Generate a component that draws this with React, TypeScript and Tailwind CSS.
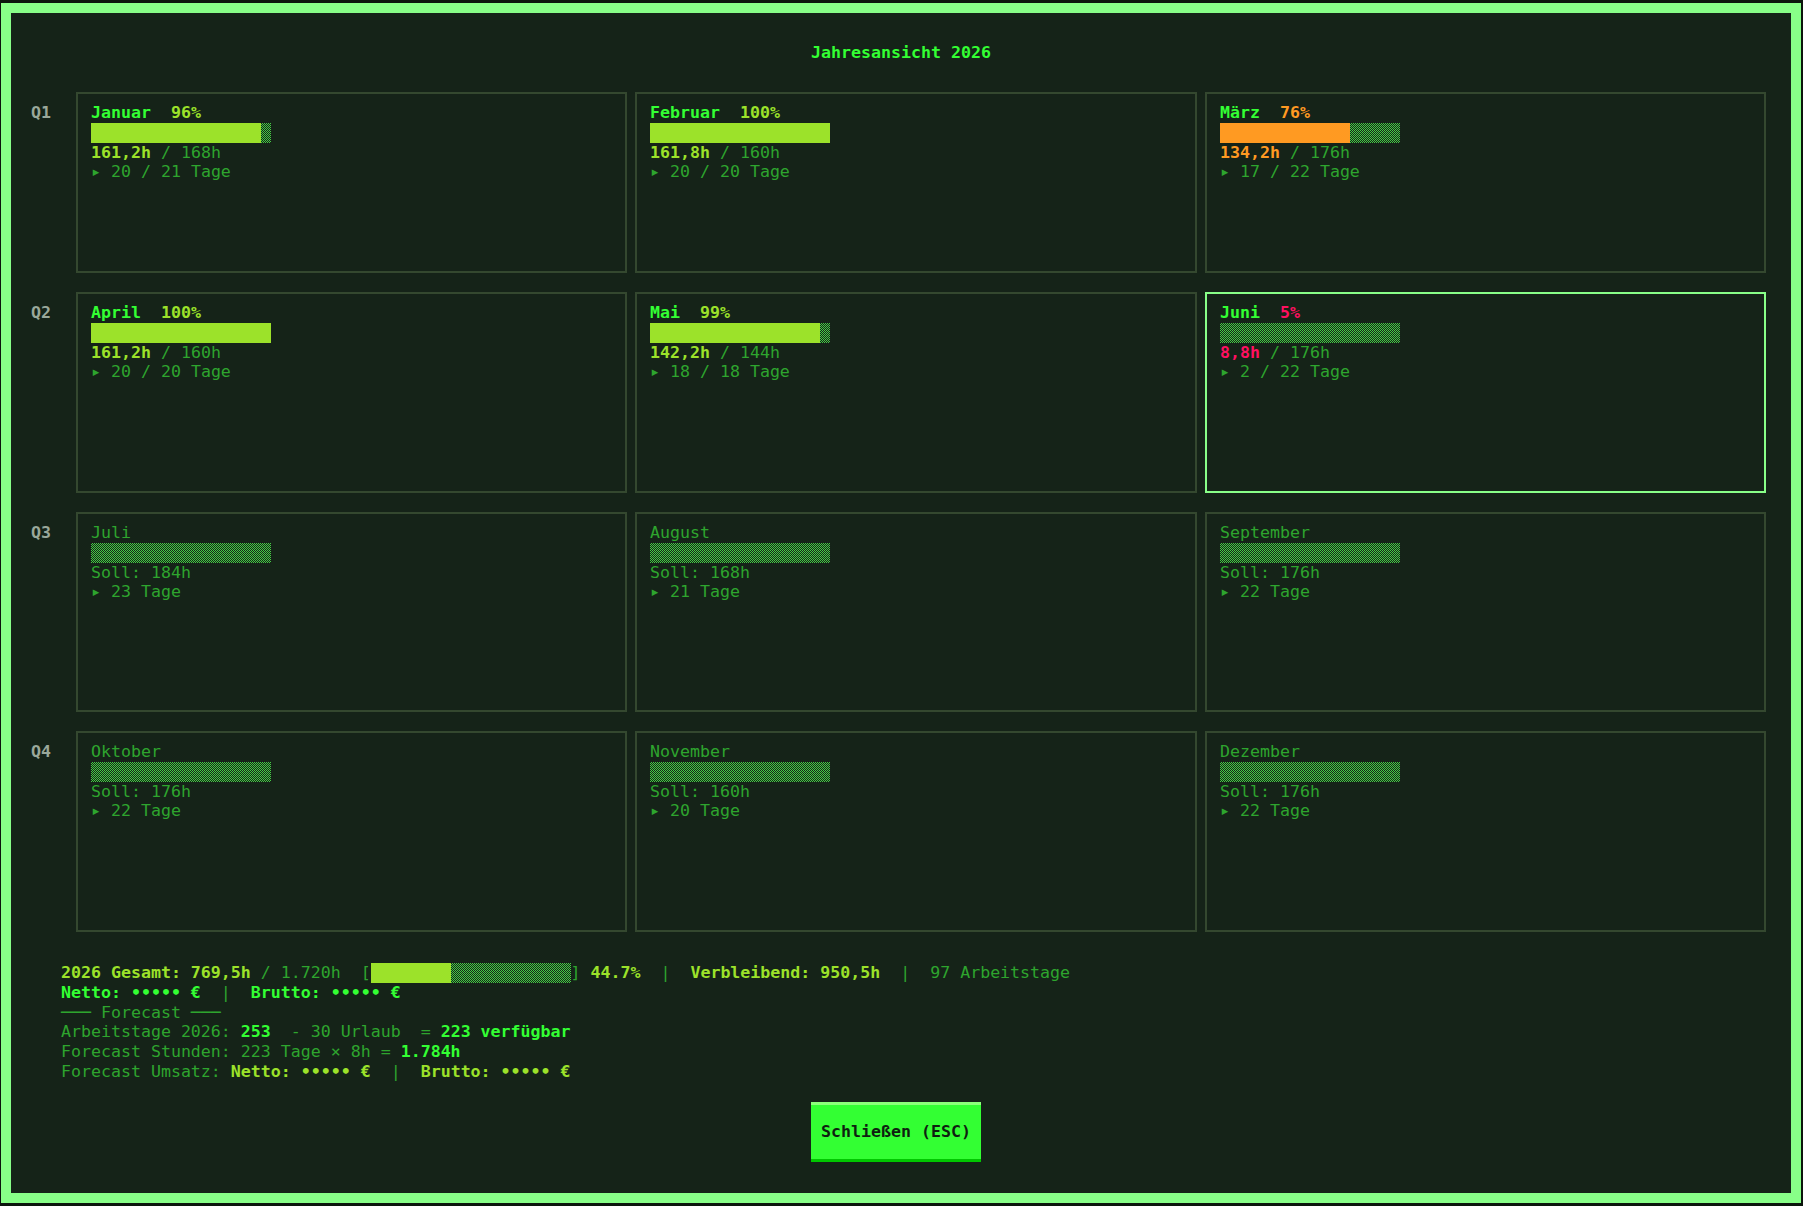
import React from 'react';

type Tone = 'ok' | 'warn' | 'bad';

interface Month {
  name: string;
  soll: string;
  tage: number;
  pct?: number;
  ist?: string;
  done?: number;
  tone?: Tone;
  current?: boolean;
}

const MONTHS: Month[] = [
  { name: 'Januar', pct: 96, ist: '161,2h', soll: '168h', done: 20, tage: 21, tone: 'ok' },
  { name: 'Februar', pct: 100, ist: '161,8h', soll: '160h', done: 20, tage: 20, tone: 'ok' },
  { name: 'März', pct: 76, ist: '134,2h', soll: '176h', done: 17, tage: 22, tone: 'warn' },
  { name: 'April', pct: 100, ist: '161,2h', soll: '160h', done: 20, tage: 20, tone: 'ok' },
  { name: 'Mai', pct: 99, ist: '142,2h', soll: '144h', done: 18, tage: 18, tone: 'ok' },
  { name: 'Juni', pct: 5, ist: '8,8h', soll: '176h', done: 2, tage: 22, tone: 'bad', current: true },
  { name: 'Juli', soll: '184h', tage: 23 },
  { name: 'August', soll: '168h', tage: 21 },
  { name: 'September', soll: '176h', tage: 22 },
  { name: 'Oktober', soll: '176h', tage: 22 },
  { name: 'November', soll: '160h', tage: 20 },
  { name: 'Dezember', soll: '176h', tage: 22 },
];

// Zeilenhöhen der Quartale und Kartenbreiten wie im Terminal-Layout
const ROW_HEIGHTS = ['h-[181px]', 'h-[201px]', 'h-[200px]', 'h-[201px]'];
const CARD_WIDTHS = ['w-[551px]', 'w-[562px]', 'w-[561px]'];

const TONE_TEXT: Record<Tone, string> = {
  ok: 'text-[#9ce22a]',
  warn: 'text-[#ff9a22]',
  bad: 'text-[#ff1060]',
};

const TONE_BG: Record<Tone, string> = {
  ok: 'bg-[#9ce22a]',
  warn: 'bg-[#ff9a22]',
  bad: 'bg-[#ff1060]',
};

// █/░ Balken, Breite in Zeichen
const Bar: React.FC<{ filled: number; total: number; fill?: string }> = ({ filled, total, fill = 'bg-[#9ce22a]' }) => (
  <div className="flex h-[20px] shrink-0" style={{ width: `${total}ch` }}>
    {filled > 0 && <div className={fill} style={{ width: `${filled}ch` }} />}
    <div className="flex-1 bg-[repeating-conic-gradient(#44cc44_0_25%,transparent_0_50%)] bg-[length:2px_2px]" />
  </div>
);

const MonthCard: React.FC<{ m: Month; width: string }> = ({ m, width }) => {
  const active = m.pct !== undefined && m.tone;
  const filled = active ? Math.floor((m.pct! / 100) * 18) : 0;

  return (
    <div
      className={`${width} h-full shrink-0 border-2 pt-[9px] pl-[13px] leading-[19.8px] ${
        m.current ? 'border-[#88ff88]' : 'border-[#34482f]'
      }`}
    >
      {active ? (
        <>
          <div className="whitespace-pre font-bold">
            <span className="text-[#33ff33]">{m.name}</span>
            <span className={TONE_TEXT[m.tone!]}>{`  ${m.pct}%`}</span>
          </div>
          <Bar filled={filled} total={18} fill={TONE_BG[m.tone!]} />
          <div className="whitespace-pre">
            <span className={`font-bold ${TONE_TEXT[m.tone!]}`}>{m.ist}</span>
            <span className="text-[#2ea52e]">{` / ${m.soll}`}</span>
          </div>
          <div className="whitespace-pre text-[#2ea52e]">{`▸ ${m.done} / ${m.tage} Tage`}</div>
        </>
      ) : (
        <>
          <div className="text-[#2ea52e]">{m.name}</div>
          <Bar filled={0} total={18} />
          <div className="whitespace-pre text-[#2ea52e]">{`Soll: ${m.soll}`}</div>
          <div className="whitespace-pre text-[#2ea52e]">{`▸ ${m.tage} Tage`}</div>
        </>
      )}
    </div>
  );
};

export default function App() {
  const quarters = [0, 1, 2, 3].map((q) => MONTHS.slice(q * 3, q * 3 + 3));

  return (
    <div className="h-[1206px] w-full bg-[#0c150d] pt-[3px] pl-[1px] pr-[2px] pb-[3px] font-['DejaVu_Sans_Mono',monospace] text-[16.6px]">
      <div className="flex h-full flex-col border-[10px] border-[#88ff88] bg-[#152318]">
        {/* Titel */}
        <div className="pt-[30px] text-center font-bold leading-[19.8px] text-[#33ff33]">Jahresansicht 2026</div>

        {/* Quartale */}
        <div className="mt-[29px] flex flex-col gap-[19px] pl-[20px]">
          {quarters.map((months, qi) => (
            <div key={qi} className={`flex ${ROW_HEIGHTS[qi]}`}>
              <div className="w-[45px] shrink-0 pt-[11px] font-bold leading-[19.8px] text-[#9aa89a]">Q{qi + 1}</div>
              <div className="flex gap-2">
                {months.map((m, i) => (
                  <MonthCard key={m.name} m={m} width={CARD_WIDTHS[i]} />
                ))}
              </div>
            </div>
          ))}
        </div>

        {/* Summen & Forecast */}
        <div className="mt-[31px] pl-[50px] leading-[19.7px] text-[#2ea52e]">
          <div className="flex items-center whitespace-pre">
            <span className="font-bold text-[#9ce22a]">2026 Gesamt: 769,5h</span>
            <span>{' / 1.720h  ['}</span>
            <Bar filled={8} total={20} />
            <span>{'] '}</span>
            <span className="font-bold text-[#9ce22a]">44.7%</span>
            <span>{'  |  '}</span>
            <span className="font-bold text-[#9ce22a]">Verbleibend: 950,5h</span>
            <span>{'  |  97 Arbeitstage'}</span>
          </div>
          <div className="whitespace-pre">
            <span className="font-bold text-[#33ff33]">Netto: ••••• €</span>
            <span>{'  |  '}</span>
            <span className="font-bold text-[#33ff33]">Brutto: ••••• €</span>
          </div>
          <div className="whitespace-pre">─── Forecast ───</div>
          <div className="whitespace-pre">
            <span>Arbeitstage 2026: </span>
            <span className="font-bold text-[#33ff33]">253</span>
            <span>{'  - 30 Urlaub  = '}</span>
            <span className="font-bold text-[#33ff33]">223 verfügbar</span>
          </div>
          <div className="whitespace-pre">
            <span>{'Forecast Stunden: 223 Tage × 8h = '}</span>
            <span className="font-bold text-[#33ff33]">1.784h</span>
          </div>
          <div className="whitespace-pre">
            <span>Forecast Umsatz: </span>
            <span className="font-bold text-[#9ce22a]">Netto: ••••• €</span>
            <span>{'  |  '}</span>
            <span className="font-bold text-[#9ce22a]">Brutto: ••••• €</span>
          </div>
        </div>

        {/* Schließen */}
        <div className="mt-[21px] flex justify-center pr-[10px]">
          <button className="h-[60px] w-[170px] border-t-[3px] border-b-[3px] border-t-[#8cff7a] border-b-[#00c800] bg-[#33ff33] font-bold text-[#0f1f10]">
            Schließen (ESC)
          </button>
        </div>
      </div>
    </div>
  );
}
